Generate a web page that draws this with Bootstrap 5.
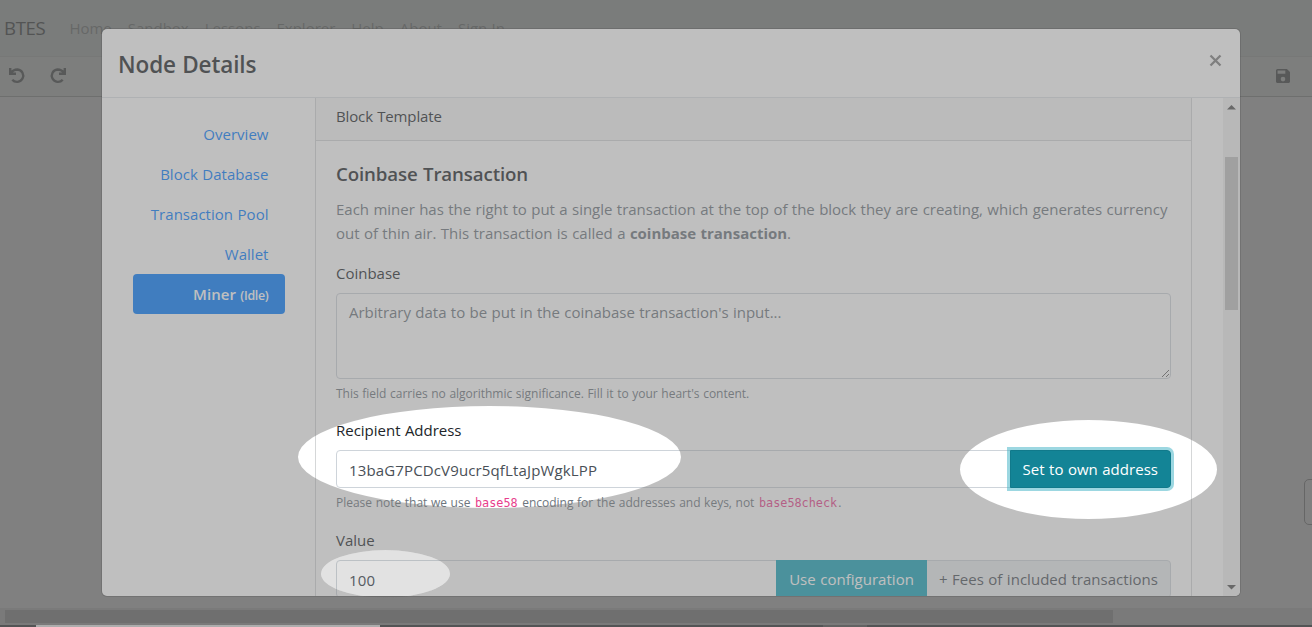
<!DOCTYPE html>
<html lang="en">
<head>
<meta charset="utf-8">
<meta name="viewport" content="width=device-width, initial-scale=1">
<title>BTES</title>
<link href="https://cdn.jsdelivr.net/npm/bootstrap@5.3.0/dist/css/bootstrap.min.css" rel="stylesheet">
<style>
:root { --ui: "Open Sans", "Noto Sans", sans-serif; }
html, body { height: 100%; overflow: hidden; }
body { font-family: var(--ui); font-size: 15px; line-height: 24px; letter-spacing: -.01px; word-spacing: .5px; color: #212529; background: #808080; }
.app-nav { height: 56px; background: #757876; padding: 0 4px; }
.app-nav .navbar-brand { font-size: 18.6px; margin-right: 16px; padding: 0; color: #262928; letter-spacing: -.35px; }
.app-nav .nav-link { padding: 0 8px; color: #4d504f; }
.toolbar { height: 41px; background: #7a7c7b; border-top: 1px solid #6e716f; border-bottom: 1px solid #5c5e5d; padding: 0 22px 2px 8px; color: #303332; }
.toolbar .redo { margin-left: 23px; }
.dock-tab { right: -6px; top: 479px; width: 14px; height: 46px; border: 1px solid #4c4c4c; border-radius: 5px; }
.page-scroll { height: 17px; padding: 2px 0 2px 5px; background: #747474; }
.page-scroll div { width: 1108px; height: 13px; background: #5e5e5e; }
.edge { height: 2px; background: #26282a; }
.edge .a { width: 36px; } .edge .b { width: 344px; background: #dadada; } .edge .c { width: 443px; } .edge .d { width: 44px; background: #454545; }
.details { position: absolute; left: 102px; top: 29px; width: 1138px; height: 567px; background: #fff; border-radius: 5px; box-shadow: 0 0 0 1px rgba(0,0,0,.22); overflow: hidden; }
.details-head { height: 69px; border-bottom: 1px solid #dee2e6; padding: 17px 18px 0 16px; }
.details-head h4 { font-size: 22.5px; line-height: 38px; font-weight: 600; letter-spacing: -.1px; margin: 0; }
.side { width: 213px; padding: 16px 30px 0 31px; }
.side .nav-link { padding: 8px 16.5px 8px 0; height: 40px; text-align: right; color: #007bff; border-radius: 4px; white-space: nowrap; letter-spacing: .03px; }
.side .nav-link.active { background: #007bff; color: #fff; font-weight: 600; }
.side small { font-size: 12.4px; letter-spacing: -.3px; }
.miner { width: 877px; border: 1px solid #d5d7d8; border-width: 0 1px; border-radius: 0; }
.miner .card-header { padding: 6px 20px 12px; background: #f7f7f7; border-color: #d5d7d8; border-radius: 0; letter-spacing: -.13px; }
.miner .card-body { padding: 20px; }
.miner h5 { font-size: 18.7px; line-height: 26px; font-weight: 600; letter-spacing: -.12px; margin: 0 0 10px; }
.miner p { color: #6c757d; margin: 0 -10px 16px 0; }
.miner .form-label { display: block; margin: 0 0 8px; }
.miner .form-control { font-size: 15px; line-height: 24px; letter-spacing: inherit; word-spacing: inherit; padding: 6px 12px; border-color: #ced4da; color: #495057; border-radius: 4px; }
.miner input.form-control { padding: 7px 12px 5px; letter-spacing: .14px; }
.miner .form-control::placeholder { color: #6c757d; }
.miner textarea.form-control { height: 86px; display: block; }
.hint { font-size: 12px; line-height: 19px; height: 19px; color: #6c757d; margin: 5px 0 15px; }
.hint.wide-gap { margin-bottom: 16px; }
.hint code { font: 11.8px "DejaVu Sans Mono", monospace; color: #e83e8c; letter-spacing: 0; margin: 0 1px; }
.miner .btn { font-size: 15px; line-height: 24px; padding: 6px 12px; letter-spacing: .03px; word-spacing: inherit; color: #fff; background: #17a2b8; border-color: #17a2b8; }
.miner .btn.on { background: #138496; border-color: #117a8b; box-shadow: 0 0 0 3px rgba(58,176,195,.5); border-radius: 0 4px 4px 0; }
.miner .input-group-text { font-size: 15px; line-height: 24px; padding: 6px 12px; background: #e9ecef; border-color: #ced4da; color: #495057; border-radius: 0 4px 4px 0; letter-spacing: .03px; }
.vbar { width: 17px; background: #f1f1f1; padding: 0 2px; }
.vbar .up { margin-top: 7px; }
.vbar .thumb { width: 13px; height: 153px; background: #c1c1c1; margin-top: 47px; }
.spot { position: absolute; inset: 0; z-index: 20; pointer-events: none; }
</style>
</head>
<body>
<div class="d-flex flex-column h-100 position-relative">
  <nav class="app-nav navbar navbar-expand flex-nowrap justify-content-start">
    <a class="navbar-brand" href="#">BTES</a>
    <div class="navbar-nav">
      <a class="nav-link" href="#">Home</a><a class="nav-link" href="#">Sandbox</a><a class="nav-link" href="#">Lessons</a><a class="nav-link" href="#">Explorer</a><a class="nav-link" href="#">Help</a><a class="nav-link" href="#">About</a><a class="nav-link" href="#">Sign In</a>
    </div>
  </nav>
  <div class="toolbar d-flex align-items-center">
    <svg width="18" height="18" viewBox="0 0 18 18" fill="none" stroke="currentColor" stroke-width="2.4"><path d="M2.200 1v5.800H8M2.500 6.500C4.500 3.300 7 2.500 9.600 2.500a6.200 6.200 0 1 1-5.300 10.200"/></svg>
    <svg class="redo" width="18" height="18" viewBox="0 0 18 18" fill="none" stroke="currentColor" stroke-width="2.4"><path d="M15.800 1v5.800H10M15.500 6.500C13.500 3.300 11 2.500 8.400 2.500a6.200 6.200 0 1 0 5.300 10.200"/></svg>
    <svg class="ms-auto" width="14" height="14" viewBox="3 3 18 18" fill="currentColor"><path d="M17 3H5a2 2 0 0 0-2 2v14c0 1.100.9 2 2 2h14c1.100 0 2-.9 2-2V7zm-5 16a3 3 0 1 1 0-6 3 3 0 0 1 0 6m3-10H5V5h10z"/></svg>
  </div>
  <div class="dock-tab position-absolute"></div>
  <div class="flex-grow-1"></div>
  <div class="page-scroll"><div></div></div>
  <div class="edge d-flex"><div class="a"></div><div class="b"></div><div class="c"></div><div class="d"></div></div>

  <section class="details d-flex flex-column" role="dialog">
    <header class="details-head d-flex justify-content-between flex-shrink-0">
      <h4>Node Details</h4>
      <svg class="mt-2" width="13" height="13" viewBox="0 0 13 13" stroke="#7f7f7f" stroke-width="2.300"><path d="M1.500 1.500l10 10M11.500 1.500l-10 10"/></svg>
    </header>
    <div class="d-flex flex-grow-1 overflow-hidden">
      <nav class="side nav nav-pills flex-column flex-nowrap flex-shrink-0">
        <a class="nav-link" href="#">Overview</a>
        <a class="nav-link" href="#">Block Database</a>
        <a class="nav-link" href="#">Transaction Pool</a>
        <a class="nav-link" href="#">Wallet</a>
        <a class="nav-link active" href="#">Miner <small>(Idle)</small></a>
      </nav>
      <div class="card miner flex-shrink-0">
        <div class="card-header">Block Template</div>
        <div class="card-body">
          <h5>Coinbase Transaction</h5>
          <p>Each miner has the right to put a single transaction at the top of the block they are creating, which generates currency<br>out of thin air. This transaction is called a <b>coinbase transaction</b>.</p>
          <label class="form-label" for="cb">Coinbase</label>
          <textarea class="form-control" id="cb" placeholder="Arbitrary data to be put in the coinabase transaction's input..."></textarea>
          <div class="hint">This field carries no algorithmic significance. Fill it to your heart's content.</div>
          <label class="form-label" for="ra">Recipient Address</label>
          <div class="input-group flex-nowrap">
            <input class="form-control" id="ra" value="13baG7PCDcV9ucr5qfLtaJpWgkLPP">
            <button class="btn on">Set to own address</button>
          </div>
          <div class="hint wide-gap">Please note that we use <code>base58</code> encoding for the addresses and keys, not <code>base58check</code>.</div>
          <label class="form-label" for="va">Value</label>
          <div class="input-group flex-nowrap">
            <input class="form-control" id="va" value="100">
            <button class="btn">Use configuration</button>
            <span class="input-group-text">+ Fees of included transactions</span>
          </div>
        </div>
      </div>
      <div class="vbar ms-auto d-flex flex-column align-items-center">
        <svg class="up" width="9" height="5" viewBox="0 0 9 5"><path d="M0 4.500L4.500 0 9 4.500z" fill="#505050"/></svg>
        <div class="thumb flex-shrink-0"></div>
        <svg class="mt-auto mb-1" width="9" height="7" viewBox="0 0 9 7"><path d="M0 0h9L4.500 4.500z" fill="#505050"/></svg>
      </div>
    </div>
  </section>

  <svg class="spot" width="1312" height="627" viewBox="0 0 1312 627">
    <path fill="#808080" fill-opacity=".5" fill-rule="evenodd" d="M0 0H1312V627H0zM298 457a191.500 51 0 1 0 383 0a191.500 51 0 1 0-383 0zM960 469.500a128.500 49.500 0 1 0 257 0a128.500 49.500 0 1 0-257 0zM321 573.800a64.500 23.700 0 1 0 129 0a64.500 23.700 0 1 0-129 0z"/>
    <ellipse cx="385.500" cy="573.800" rx="64.500" ry="23.700" fill="#808080" fill-opacity=".23"/>
  </svg>
</div>
<script src="https://cdn.jsdelivr.net/npm/bootstrap@5.3.0/dist/js/bootstrap.bundle.min.js"></script>
</body>
</html>
